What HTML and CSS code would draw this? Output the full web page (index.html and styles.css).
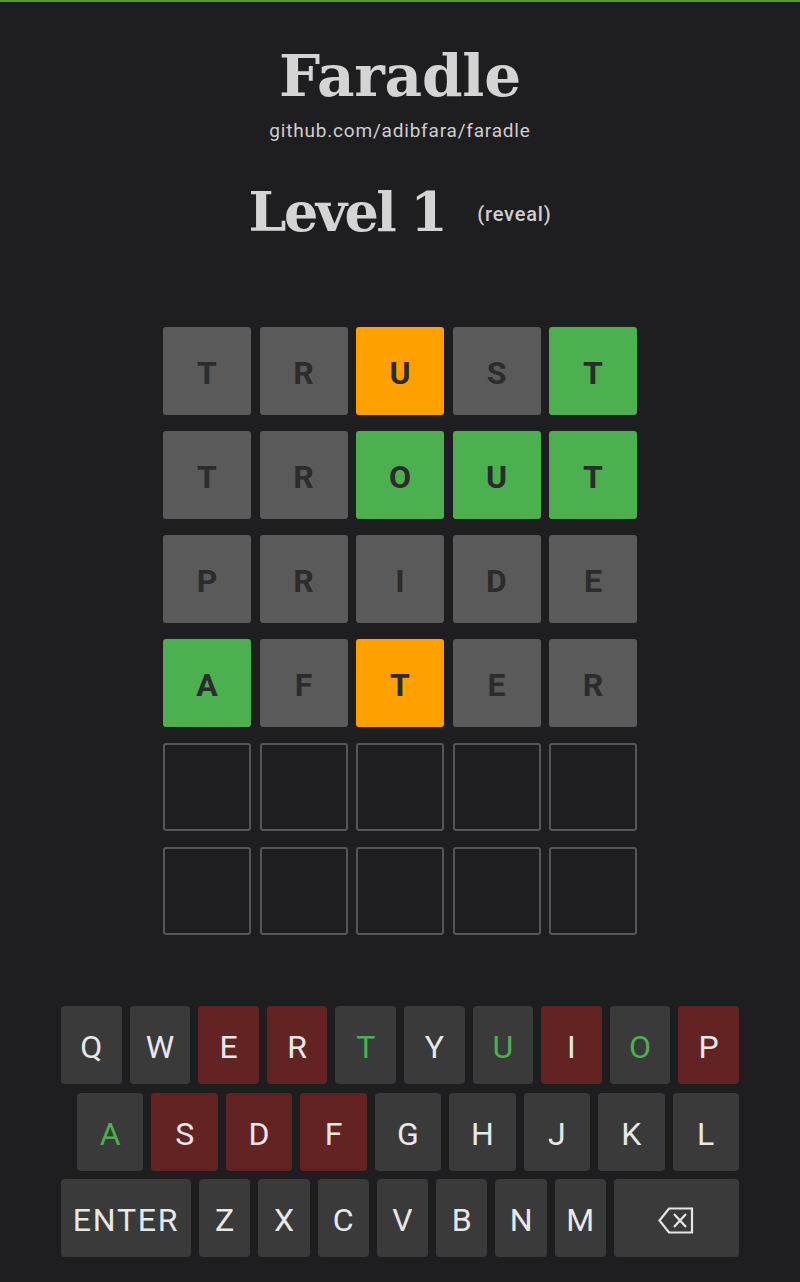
FILE: index.html
```html
<!DOCTYPE html>
<html lang="en">
<head>
<meta charset="utf-8">
<title>Faradle</title>
<link rel="stylesheet" href="styles.css">
</head>
<body>
<main class="app">
  <header class="header">
    <h1 class="title">Faradle</h1>
    <div class="repo">github.com/adibfara/faradle</div>
    <div class="level-row">
      <h2 class="level">Level 1</h2>
      <span class="reveal">(reveal)</span>
    </div>
  </header>

  <section class="board">
    <div class="tile absent">T</div><div class="tile absent">R</div><div class="tile present">U</div><div class="tile absent">S</div><div class="tile correct">T</div>
    <div class="tile absent">T</div><div class="tile absent">R</div><div class="tile correct">O</div><div class="tile correct">U</div><div class="tile correct">T</div>
    <div class="tile absent">P</div><div class="tile absent">R</div><div class="tile absent">I</div><div class="tile absent">D</div><div class="tile absent">E</div>
    <div class="tile correct">A</div><div class="tile absent">F</div><div class="tile present">T</div><div class="tile absent">E</div><div class="tile absent">R</div>
    <div class="tile empty"></div><div class="tile empty"></div><div class="tile empty"></div><div class="tile empty"></div><div class="tile empty"></div>
    <div class="tile empty"></div><div class="tile empty"></div><div class="tile empty"></div><div class="tile empty"></div><div class="tile empty"></div>
  </section>

  <section class="keyboard">
    <div class="kb-row">
      <div class="key">Q</div><div class="key">W</div><div class="key miss">E</div><div class="key miss">R</div><div class="key hit">T</div><div class="key">Y</div><div class="key hit">U</div><div class="key miss">I</div><div class="key hit">O</div><div class="key miss">P</div>
    </div>
    <div class="kb-row row-mid">
      <div class="key hit">A</div><div class="key miss">S</div><div class="key miss">D</div><div class="key miss">F</div><div class="key">G</div><div class="key">H</div><div class="key">J</div><div class="key">K</div><div class="key">L</div>
    </div>
    <div class="kb-row">
      <div class="key key-enter">ENTER</div><div class="key">Z</div><div class="key">X</div><div class="key">C</div><div class="key">V</div><div class="key">B</div><div class="key">N</div><div class="key">M</div>
      <div class="key key-back">
        <svg class="back-icon" width="36" height="27" viewBox="0 0 36 27" aria-hidden="true">
          <path d="M11 1.5 H34 V25.5 H11 L1.5 13.5 Z" fill="none" stroke="#e6e6e6" stroke-width="2.2" stroke-linejoin="miter"/>
          <path d="M16 7 L28 20 M28 7 L16 20" stroke="#e6e6e6" stroke-width="2.2"/>
        </svg>
      </div>
    </div>
  </section>
</main>
</body>
</html>
```

FILE: styles.css
```css
html, body {
  margin: 0;
  padding: 0;
}

body {
  background: #1e1e21;
  border-top: 2px solid #5b9c2c;
  min-height: 1280px;
  font-family: Roboto, "Liberation Sans", sans-serif;
  color: #d4d4d4;
}

.app {
  display: flex;
  flex-direction: column;
  align-items: center;
}

.header {
  display: flex;
  flex-direction: column;
  align-items: center;
}

.title {
  margin: 45px 0 0;
  font-family: "DejaVu Serif", "Liberation Serif", serif;
  font-weight: bold;
  font-size: 58px;
  line-height: 58px;
  letter-spacing: -0.2px;
  color: #d4d4d4;
}

.repo {
  margin-top: 15px;
  font-size: 19px;
  line-height: 22px;
  letter-spacing: 0.8px;
  color: #cfcfcf;
}

.level-row {
  margin-top: 42px;
  display: flex;
  align-items: center;
  gap: 32px;
}

.level {
  margin: 0;
  font-family: "DejaVu Serif", "Liberation Serif", serif;
  font-weight: bold;
  font-size: 54px;
  line-height: 56px;
  letter-spacing: -2.6px;
  color: #d4d4d4;
}

.reveal {
  font-size: 20px;
  font-weight: 500;
  letter-spacing: 0.8px;
  color: #cfcfcf;
  margin-top: 3px;
}

.board {
  margin-top: 87px;
  display: grid;
  grid-template-columns: repeat(5, 88px);
  grid-auto-rows: 88px;
  column-gap: 8.5px;
  row-gap: 16px;
}

.tile {
  display: flex;
  align-items: center;
  justify-content: center;
  padding-top: 3px;
  border-radius: 3px;
  font-family: Roboto, "Liberation Sans", sans-serif;
  font-weight: bold;
  font-size: 32px;
  color: #2c2c2c;
  box-sizing: border-box;
}

.absent { background: #5a5a5a; }
.present { background: #ffa000; }
.correct { background: #4caf50; }
.empty {
  border: 2px solid #565656;
  background: transparent;
}

.keyboard {
  margin-top: 71px;
  width: 678px;
  display: flex;
  flex-direction: column;
  gap: 8.5px;
}

.kb-row {
  display: flex;
  gap: 8px;
  height: 78px;
}

.row-mid {
  padding-left: 16px;
}

.key {
  flex: 1 1 0;
  display: flex;
  align-items: center;
  justify-content: center;
  padding-top: 4px;
  box-sizing: border-box;
  background: #3a3a3a;
  border-radius: 4px;
  font-size: 32px;
  color: #e8e8e8;
}

.key.miss { background: #632323; }
.key.hit { color: #4caf50; }

.key-enter {
  flex: 0 0 130px;
  letter-spacing: 1.8px;
}

.key-back {
  flex: 0 0 125px;
}

.back-icon {
  display: block;
}
```
